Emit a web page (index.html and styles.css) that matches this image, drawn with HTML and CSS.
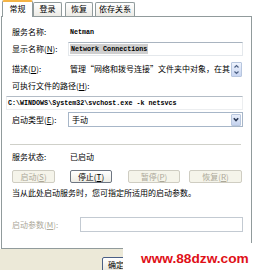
FILE: index.html
```html
<!DOCTYPE html>
<html>
<head>
<meta charset="utf-8">
<link rel="stylesheet" href="styles.css">
</head>
<body>
<div class="tabs">
  <div class="tab active">常规</div>
  <div class="tab t2">登录</div>
  <div class="tab t3">恢复</div>
  <div class="tab t4">依存关系</div>
</div>
<div class="panel">
  <div class="row r1"><span class="lbl">服务名称:</span><span class="mono val">Netman</span></div>
  <div class="row r2"><span class="lbl">显示名称(<u>N</u>):</span><div class="edit"><span class="mono sel">Network Connections</span></div></div>
  <div class="row r3"><span class="lbl">描述(<u>D</u>):</span><div class="desc"><span class="desctext">管理“网络和拨号连接”文件夹中对象，在其</span><span class="spin"><svg width="9" height="13" viewBox="0 0 9 13"><path d="M2.5 4.5 L4.5 2.5 L6.5 4.5" fill="none" stroke="#4d6185" stroke-width="1.2"/><path d="M2.5 8.5 L4.5 10.5 L6.5 8.5" fill="none" stroke="#4d6185" stroke-width="1.2"/></svg></span></div></div>
  <div class="row r4"><span class="lbl">可执行文件的路径(<u>H</u>):</span></div>
  <div class="row r5"><div class="path mono">C:\WINDOWS\System32\svchost.exe -k netsvcs</div></div>
  <div class="row r6"><span class="lbl">启动类型(<u>E</u>):</span><div class="combo"><span class="ctext">手动</span><span class="cbtn"><svg width="8" height="11" viewBox="0 0 8 11"><path d="M1.8 4.3 L4 6.5 L6.2 4.3" fill="none" stroke="#2b3a55" stroke-width="1.6"/></svg></span></div></div>
  <div class="sep"></div>
  <div class="row r7"><span class="lbl">服务状态:</span><span class="val">已启动</span></div>
  <div class="btns">
    <div class="btn dis b1">启动(<u>S</u>)</div>
    <div class="btn b2">停止(<u>T</u>)</div>
    <div class="btn dis b3">暂停(<u>P</u>)</div>
    <div class="btn dis b4">恢复(<u>R</u>)</div>
  </div>
  <div class="note">当从此处启动服务时，您可指定所适用的启动参数。</div>
  <div class="row r8"><span class="lbl dislbl">启动参数(<u>M</u>):</span><div class="param"></div></div>
</div>
<div class="footer">
  <div class="okbtn">确定</div>
</div>
<div class="wm">www.88dzw.com</div>
</body>
</html>
```

FILE: styles.css
```css
* { box-sizing: border-box; }
html, body { margin: 0; padding: 0; }
body {
  width: 256px;
  height: 270px;
  background: #fff;
  font-family: "Noto Sans CJK SC", "Noto Sans", sans-serif;
  font-size: 8px;
  line-height: 12px;
  color: #000;
  position: relative;
  overflow: hidden;
}
u { text-decoration: underline; }
.mono { font-family: "Liberation Mono", monospace; font-size: 6.7px; font-weight: bold; }

.tabs {
  display: flex;
  align-items: flex-end;
  height: 16px;
  padding-left: 2px;
  position: relative;
  z-index: 2;
}
.tab {
  height: 14px;
  border: 1px solid #919b9c;
  border-bottom: none;
  border-radius: 2px 2px 0 0;
  background: linear-gradient(#ffffff, #ecebe6);
  text-align: center;
  line-height: 12px;
  width: 29px;
}
.tab.active {
  width: 31px;
  height: 17px;
  margin-bottom: -1px;
  background: #fff;
  border-top: 2px solid #f5b445;
  line-height: 13px;
}
.t2 { width: 29px; }
.t3 { width: 28px; margin-left: 3px; }
.t4 { width: 40px; margin-left: 2px; }

.panel {
  height: 233px;
  margin: 0 4px 0 1px;
  border: 1px solid #919b9c;
  background: #fff;
  padding: 8px 8px 0 10px;
}
.row { display: flex; align-items: center; }
.lbl { width: 56px; flex: none; white-space: nowrap; }
.val { margin-left: 2px; }
.r1 { height: 14px; }
.r2 { height: 14px; margin-top: 3px; }
.edit {
  flex: 1;
  height: 14px;
  border: 1px solid #e4e8ec;
  border-top-color: #a9b4c0;
  padding-left: 1px;
  display: flex;
  align-items: center;
}
.sel { background: #cfcfcf; line-height: 10px; padding: 0 1px; }
.r3 { height: 16px; margin-top: 5px; }
.desc { flex: 1; display: flex; align-items: center; height: 16px; }
.desctext { margin-left: 2px; flex: 1; white-space: nowrap; overflow: hidden; }
.spin {
  flex: none;
  width: 11px;
  height: 15px;
  border: 1px solid #b7c6de;
  border-radius: 1px;
  background: linear-gradient(#eef3fd, #c9d6f2);
  display: flex;
  align-items: center;
  justify-content: center;
  margin-right: 1px;
}
.spin svg { display: block; }
.r4 { height: 12px; margin-top: 3px; }
.r5 { height: 14px; margin-top: 4px; }
.path {
  flex: 1;
  height: 14px;
  margin-left: -6px;
  border: 1px solid #eceef0;
  border-top-color: #b3bcc6;
  line-height: 12px;
  padding-left: 1px;
  white-space: nowrap;
}
.r6 { height: 15px; margin-top: 2px; }
.combo {
  flex: 1;
  height: 15px;
  border: 1px solid #a7b6c8;
  display: flex;
  align-items: center;
  justify-content: space-between;
  padding: 0 1px 0 3px;
}
.cbtn {
  width: 10px;
  height: 12px;
  border: 1px solid #b9c7de;
  border-radius: 1px;
  background: linear-gradient(#e9effb, #c4d2ee);
  display: flex;
  align-items: center;
  justify-content: center;
}
.cbtn svg { display: block; }
.sep {
  height: 1px;
  background: #cfd0c9;
  margin: 17px 2px 0 -2px;
}
.r7 { height: 12px; margin-top: 6px; }
.btns { display: flex; height: 13px; margin-top: 7px; }
.btn {
  height: 13px;
  border: 1px solid #6e7682;
  border-radius: 2px;
  background: linear-gradient(#ffffff, #eeede5);
  text-align: center;
  line-height: 11px;
}
.btn.dis { border-color: #cfcdc2; background: #f5f4ea; color: #aca899; }
.b1 { width: 43px; }
.b2 { width: 42px; margin-left: 15px; }
.b3 { width: 52px; margin-left: 16px; }
.b4 { width: 53px; margin-left: 9px; }
.note { height: 12px; margin-top: 4px; white-space: nowrap; }
.r8 { height: 15px; margin-top: 18px; }
.dislbl { color: #aca899; width: 68px; }
.param {
  flex: 1;
  height: 15px;
  border: 1px solid #c3cad2;
}

.footer {
  height: 22px;
  background: #ece9d8;
  padding: 8px 0 0 102px;
}
.okbtn {
  width: 28px;
  height: 16px;
  border: 1px solid #4a5f86;
  border-radius: 2px;
  background: linear-gradient(#ffffff, #e6e4da);
  text-align: center;
  line-height: 13px;
}
.wm {
  position: absolute;
  left: 123px;
  top: 243px;
  width: 133px;
  height: 27px;
  background: #fff;
  color: #e01018;
  font-family: "Liberation Sans", Arial, sans-serif;
  font-weight: bold;
  font-size: 13.7px;
  line-height: 16px;
  padding: 8px 0 0 18px;
  white-space: nowrap;
}
```
